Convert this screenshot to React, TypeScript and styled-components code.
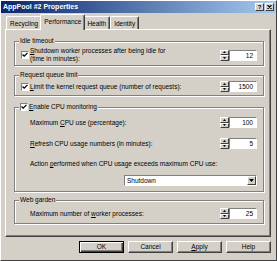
import React from 'react';
import styled, { createGlobalStyle } from 'styled-components';

const face = '#d4d0c8';
const shadow = '#808080';
const dark = '#404040';
const light = '#ffffff';

const Global = createGlobalStyle`
  html, body { margin: 0; padding: 0; background: ${face}; }
  body {
    font-family: "Liberation Sans", Arial, sans-serif;
    font-size: 6.5px;
    color: #000;
  }
  * { box-sizing: border-box; }
`;

const Window = styled.div`
  width: 277px;
  height: 261px;
  background: ${face};
  border: 1px solid;
  border-color: ${light} ${dark} ${dark} ${light};
  display: flex;
  flex-direction: column;
`;

const TitleBar = styled.div`
  height: 12px;
  display: flex;
  align-items: center;
  padding: 0 2px;
  background: linear-gradient(to right, #0a246a, #a6caf0);
`;

const TitleText = styled.span`
  flex: 1;
  font-weight: bold;
  font-size: 7px;
  line-height: 12px;
  color: #fff;
  white-space: nowrap;
`;

const CaptionButtons = styled.div`
  display: flex;
  gap: 1px;
`;

const CaptionButton = styled.div`
  width: 9px;
  height: 8px;
  background: ${face};
  border: 1px solid;
  border-color: ${light} ${dark} ${dark} ${light};
  display: flex;
  align-items: center;
  justify-content: center;
  font-size: 6px;
  font-weight: bold;
  line-height: 1;
`;

const Body = styled.div`
  flex: 1;
  display: flex;
  flex-direction: column;
  padding: 3px 5px 0 4px;
`;

const TabStrip = styled.div`
  height: 13px;
  display: flex;
  align-items: flex-end;
  padding-left: 1px;
`;

const Tab = styled.div<{ $active?: boolean }>`
  height: ${(p) => (p.$active ? 16 : 13)}px;
  padding: ${(p) => (p.$active ? '1px 3px 0' : '1px 3px 0')};
  margin: ${(p) => (p.$active ? '0 -2px -1px' : '0')};
  line-height: 11px;
  white-space: nowrap;
  background: ${face};
  border-top: 1px solid ${light};
  border-left: 1px solid ${light};
  border-right: 1px solid ${dark};
  border-radius: 2px 2px 0 0;
  box-shadow: inset -1px 0 0 ${shadow};
  position: relative;
  z-index: ${(p) => (p.$active ? 1 : 0)};
`;

const Panel = styled.div`
  height: 208px;
  display: flex;
  flex-direction: column;
  padding: 7px 6px 0 8px;
  border: 1px solid;
  border-color: ${light} ${dark} ${dark} ${light};
  box-shadow: inset -1px -1px 0 ${shadow};
`;

const Group = styled.fieldset<{ $gap?: number }>`
  margin: ${(p) => p.$gap ?? 0}px 0 0 0;
  padding: 0 6px;
  min-width: 0;
  border: 1px solid ${shadow};
  box-shadow: inset 1px 1px 0 ${light}, 1px 1px 0 ${light};
  display: flex;
  flex-direction: column;
`;

const Legend = styled.legend`
  margin-left: -2px;
  padding: 0 1px;
  line-height: 8px;
  height: 8px;
  display: flex;
  align-items: center;
  gap: 1px;
  background: ${face};
`;

const Row = styled.div<{ $pt?: number; $pb?: number }>`
  display: flex;
  align-items: center;
  justify-content: space-between;
  padding: ${(p) => p.$pt ?? 0}px 0 ${(p) => p.$pb ?? 0}px;
  min-height: 11px;
`;

const CheckLine = styled.div`
  display: flex;
  align-items: center;
  gap: 1px;
`;

const LabelText = styled.span`
  line-height: 8px;
  white-space: nowrap;
`;

const Indented = styled.span<{ $mt?: number }>`
  margin-left: 9px;
  line-height: 8px;
  white-space: nowrap;
`;

const Stack = styled.div<{ $pt: number; $pb: number }>`
  display: flex;
  flex-direction: column;
  padding: ${(p) => p.$pt}px 0 ${(p) => p.$pb}px;
`;

const Spaced = styled.div<{ $mt: number }>`
  margin-top: ${(p) => p.$mt}px;
  display: flex;
  align-items: center;
  justify-content: space-between;
`;

const U = styled.span`
  text-decoration: underline;
  text-underline-offset: 1px;
`;

const CheckBoxBox = styled.span`
  width: 8px;
  height: 8px;
  flex: none;
  background: #fff;
  border: 1px solid;
  border-color: ${shadow} ${light} ${light} ${shadow};
  display: flex;
  align-items: center;
  justify-content: center;
`;

const Spinner = styled.div`
  display: flex;
  height: 11px;
  width: 37px;
  flex: none;
`;

const SpinButtons = styled.div`
  width: 9px;
  display: flex;
  flex-direction: column;
`;

const SpinButton = styled.div`
  flex: 1;
  background: ${face};
  border: 1px solid;
  border-color: ${light} ${dark} ${dark} ${light};
  display: flex;
  align-items: center;
  justify-content: center;
`;

const SpinField = styled.div`
  flex: 1;
  background: #fff;
  border: 1px solid;
  border-color: ${shadow} ${light} ${light} ${shadow};
  text-align: right;
  padding-right: 3px;
  line-height: 9px;
`;

const Select = styled.div`
  align-self: flex-end;
  width: 133px;
  height: 11px;
  display: flex;
  background: #fff;
  border: 1px solid;
  border-color: ${shadow} ${light} ${light} ${shadow};
`;

const SelectText = styled.span`
  flex: 1;
  padding-left: 2px;
  line-height: 9px;
`;

const SelectArrow = styled.div`
  width: 9px;
  background: ${face};
  border: 1px solid;
  border-color: ${light} ${dark} ${dark} ${light};
  display: flex;
  align-items: center;
  justify-content: center;
`;

const ButtonRow = styled.div`
  margin-top: 4px;
  display: flex;
  justify-content: flex-end;
  gap: 4px;
`;

const Button = styled.div<{ $default?: boolean }>`
  width: 45px;
  height: 12px;
  display: flex;
  align-items: center;
  justify-content: center;
  background: ${face};
  border: 1px solid;
  border-color: ${(p) => (p.$default ? '#000' : `${light} ${dark} ${dark} ${light}`)};
  box-shadow: ${(p) =>
    p.$default
      ? `inset 1px 1px 0 ${light}, inset -1px -1px 0 ${dark}, inset -2px -2px 0 ${shadow}`
      : `inset -1px -1px 0 ${shadow}`};
  line-height: 10px;
`;

const Check = () => (
  <CheckBoxBox>
    <svg width="6" height="6" viewBox="0 0 6 6">
      <path d="M0.5 2.5 L2.2 4.2 L5.5 0.9" stroke="#000" strokeWidth="1.3" fill="none" />
    </svg>
  </CheckBoxBox>
);

const Up = () => (
  <svg width="3" height="2" viewBox="0 0 3 2">
    <path d="M0 2 L1.5 0 L3 2 Z" fill="#000" />
  </svg>
);

const Down = ({ w = 3, h = 2 }: { w?: number; h?: number }) => (
  <svg width={w} height={h} viewBox={`0 0 ${w} ${h}`}>
    <path d={`M0 0 L${w} 0 L${w / 2} ${h} Z`} fill="#000" />
  </svg>
);

const Spin = ({ value }: { value: string }) => (
  <Spinner>
    <SpinButtons>
      <SpinButton>
        <Up />
      </SpinButton>
      <SpinButton>
        <Down />
      </SpinButton>
    </SpinButtons>
    <SpinField>{value}</SpinField>
  </Spinner>
);

export default function App() {
  return (
    <>
      <Global />
      <Window>
        <TitleBar>
          <TitleText>AppPool #2 Properties</TitleText>
          <CaptionButtons>
            <CaptionButton>?</CaptionButton>
            <CaptionButton>
              <svg width="5" height="4" viewBox="0 0 5 4">
                <path d="M0.5 0 L4.5 4 M4.5 0 L0.5 4" stroke="#000" strokeWidth="1.1" />
              </svg>
            </CaptionButton>
          </CaptionButtons>
        </TitleBar>
        <Body>
          <TabStrip>
            <Tab>Recycling</Tab>
            <Tab $active>Performance</Tab>
            <Tab>Health</Tab>
            <Tab>Identity</Tab>
          </TabStrip>
          <Panel>
            <Group>
              <Legend>Idle timeout</Legend>
              <Row $pt={2} $pb={2}>
                <CheckLine>
                  <Check />
                  <LabelText>
                    <U>S</U>hutdown worker processes after being idle for
                    <br />
                    (time in minutes):
                  </LabelText>
                </CheckLine>
                <Spin value="12" />
              </Row>
            </Group>

            <Group $gap={5}>
              <Legend>Request queue limit</Legend>
              <Row $pt={2} $pb={3}>
                <CheckLine>
                  <Check />
                  <LabelText>
                    <U>L</U>imit the kernel request queue (number of requests):
                  </LabelText>
                </CheckLine>
                <Spin value="1500" />
              </Row>
            </Group>

            <Group $gap={7}>
              <Legend>
                <Check />
                <LabelText>
                  <U>E</U>nable CPU monitoring
                </LabelText>
              </Legend>
              <Stack $pt={6} $pb={5}>
                <Spaced $mt={0}>
                  <Indented>
                    Maximum <U>C</U>PU use (percentage):
                  </Indented>
                  <Spin value="100" />
                </Spaced>
                <Spaced $mt={10}>
                  <Indented>
                    <U>R</U>efresh CPU usage numbers (in minutes):
                  </Indented>
                  <Spin value="5" />
                </Spaced>
                <Spaced $mt={11}>
                  <Indented>
                    Action <U>p</U>erformed when CPU usage exceeds maximum CPU use:
                  </Indented>
                </Spaced>
                <Spaced $mt={7}>
                  <span />
                  <Select>
                    <SelectText>Shutdown</SelectText>
                    <SelectArrow>
                      <Down w={5} h={3} />
                    </SelectArrow>
                  </Select>
                </Spaced>
              </Stack>
            </Group>

            <Group $gap={4}>
              <Legend>Web garden</Legend>
              <Row $pt={4} $pb={4}>
                <Indented>
                  Maximum number of <U>w</U>orker processes:
                </Indented>
                <Spin value="25" />
              </Row>
            </Group>
          </Panel>
          <ButtonRow>
            <Button $default>OK</Button>
            <Button>Cancel</Button>
            <Button>
              <span>
                <U>A</U>pply
              </span>
            </Button>
            <Button>Help</Button>
          </ButtonRow>
        </Body>
      </Window>
    </>
  );
}
